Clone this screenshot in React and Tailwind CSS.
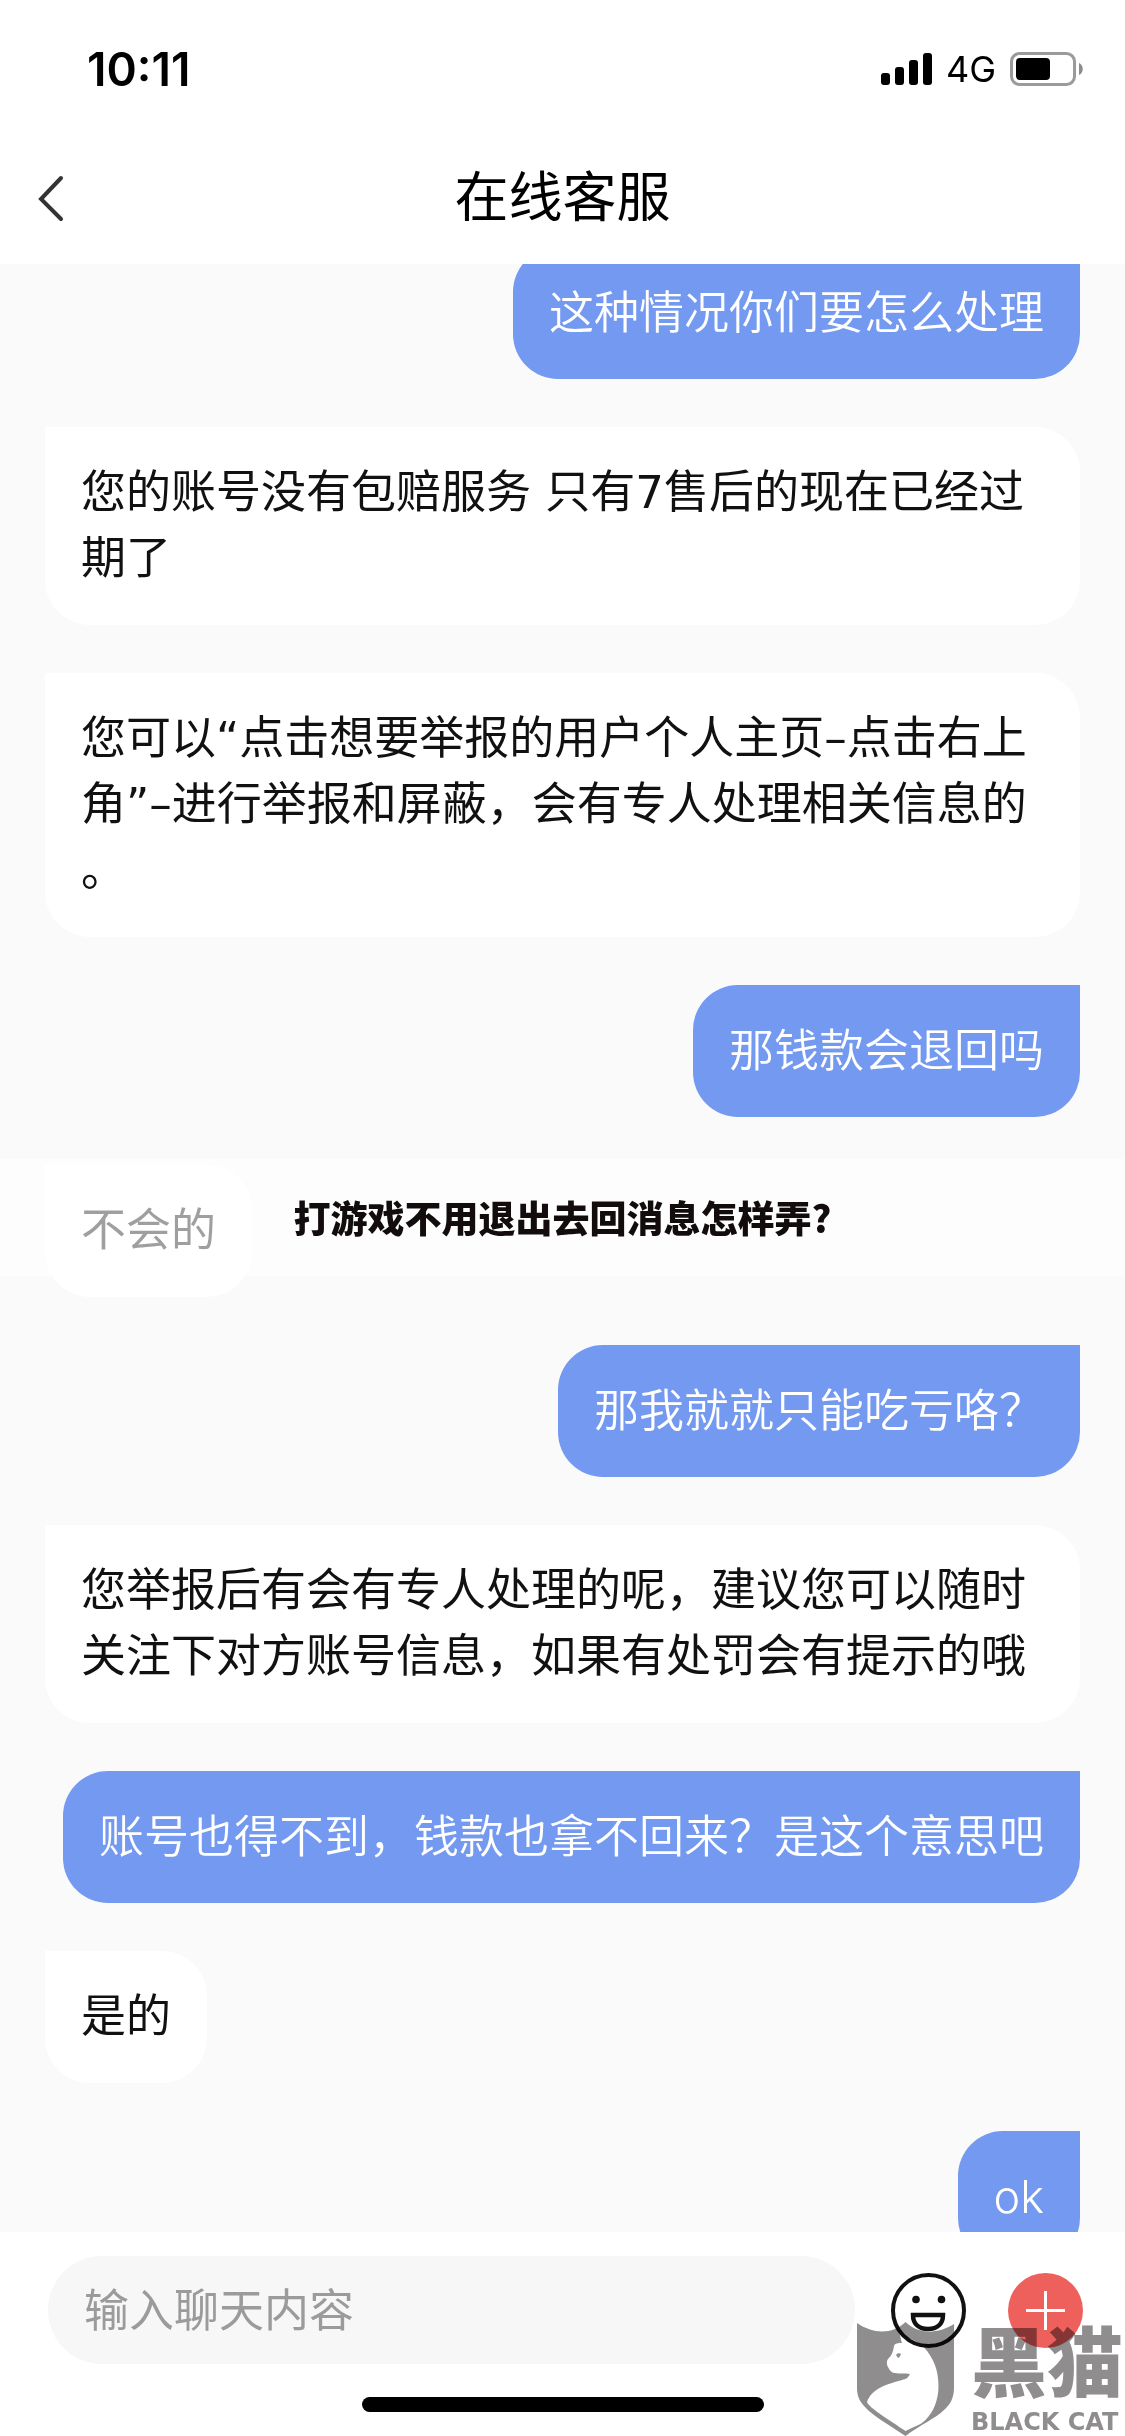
import React from 'react';
import { clsx } from 'clsx';

const messages = [
  { id: 1, from: 'me', lines: ['这种情况你们要怎么处理'] },
  { id: 2, from: 'agent', lines: ['您的账号没有包赔服务 只有7售后的现在已经过', '期了'] },
  {
    id: 3,
    from: 'agent',
    lines: ['您可以“点击想要举报的用户个人主页–点击右上', '角”–进行举报和屏蔽，会有专人处理相关信息的', '。'],
  },
  { id: 4, from: 'me', lines: ['那钱款会退回吗'] },
  { id: 5, from: 'agent', lines: ['不会的'], banner: '打游戏不用退出去回消息怎样弄?' },
  { id: 6, from: 'me', lines: ['那我就就只能吃亏咯？'] },
  { id: 7, from: 'agent', lines: ['您举报后有会有专人处理的呢，建议您可以随时', '关注下对方账号信息，如果有处罚会有提示的哦'] },
  { id: 8, from: 'me', lines: ['账号也得不到，钱款也拿不回来？是这个意思吧'] },
  { id: 9, from: 'agent', lines: ['是的'] },
  { id: 10, from: 'me', lines: ['ok'] },
];

function StatusBar() {
  return (
    <div className="h-[132px] pt-1.5 pl-[87px] pr-[42px] flex items-center justify-between">
      <span className="text-[46px] leading-none font-semibold">10:11</span>
      <div className="flex items-center gap-[14px]">
        <svg width="51" height="32" viewBox="0 0 51 32" aria-hidden="true">
          <rect x="0" y="20" width="9" height="12" rx="3" />
          <rect x="14" y="14" width="9" height="18" rx="3" />
          <rect x="28" y="7" width="9" height="25" rx="3" />
          <rect x="42" y="0" width="9" height="32" rx="3" />
        </svg>
        <span className="text-[36px] leading-none">4G</span>
        <svg width="73" height="34" viewBox="0 0 73 34" aria-hidden="true">
          <rect x="1.5" y="1.5" width="63" height="31" rx="8" fill="none" stroke="#9b9b9b" strokeWidth="3" />
          <rect x="6" y="6" width="34" height="22" rx="4" />
          <path d="M69 11c5 2 5 10 0 12z" fill="#8c8c8c" />
        </svg>
      </div>
    </div>
  );
}

function Header() {
  return (
    <header className="shrink-0 bg-white">
      <StatusBar />
      <div className="h-[132px] px-[36px] grid grid-cols-[60px_1fr_60px] items-center">
        <button type="button" aria-label="返回" className="h-[60px] flex items-center">
          <svg width="30" height="48" viewBox="0 0 30 48" fill="none" stroke="#333" strokeWidth="4" strokeLinecap="round">
            <path d="M25 4 5 25l20 20" />
          </svg>
        </button>
        <h1 className="text-[54px] leading-none text-center">在线客服</h1>
      </div>
    </header>
  );
}

function Message({ from, lines, banner }) {
  const mine = from === 'me';
  return (
    <li className={clsx('relative px-[45px] flex', mine ? 'justify-end' : 'justify-start')}>
      <p
        className={clsx(
          'px-[36px] py-[33px] text-[45px] leading-[66px] rounded-b-[45px] whitespace-nowrap',
          mine
            ? 'rounded-tl-[45px] bg-[#7499f0] text-white font-[350]'
            : "rounded-tr-[45px] bg-white text-[#111] font-['DejaVu_Sans','Noto_Sans_CJK_SC',sans-serif]",
          lines.length > 1 && 'w-full'
        )}
      >
        {lines.map((line) => (
          <span key={line} className="block">{line}</span>
        ))}
      </p>
      {banner && (
        <div className="absolute inset-x-0 -top-1.5 h-[117px] bg-white/60 flex items-center justify-center text-[37px] font-black text-[#120c0c] font-['Noto_Sans_CJK_SC',sans-serif]">
          {banner}
        </div>
      )}
    </li>
  );
}

function SmileIcon() {
  return (
    <svg width="75" height="75" viewBox="0 0 75 75" fill="none" stroke="#111" strokeWidth="4">
      <circle cx="37.5" cy="37.5" r="35.5" />
      <circle cx="25" cy="26.5" r="3.8" fill="#111" stroke="none" />
      <circle cx="50.5" cy="26.5" r="3.8" fill="#111" stroke="none" />
      <path d="M22 42h30c0 9-6 14-15 14s-15-5-15-14z" strokeWidth="4.5" />
    </svg>
  );
}

function Composer() {
  return (
    <footer className="shrink-0 bg-white pt-6 pb-6">
      <form className="pl-[48px] pr-[42px] flex items-center" onSubmit={(e) => e.preventDefault()}>
        <input
          type="text"
          aria-label="输入聊天内容"
          placeholder="输入聊天内容"
          className="flex-1 min-w-0 h-[108px] px-[36px] rounded-full bg-[#f7f7f7] text-[45px] outline-none placeholder:text-[#9b9b9b]"
        />
        <button type="button" aria-label="表情" className="ml-[36px]">
          <SmileIcon />
        </button>
        <button type="button" aria-label="更多" className="ml-[42px]">
          <svg width="75" height="75" viewBox="0 0 75 75">
            <circle cx="37.5" cy="37.5" r="37.5" fill="#ed605c" />
            <path d="M37.5 18v39M18 37.5h39" stroke="#fff" strokeWidth="3" />
          </svg>
        </button>
      </form>
      <div className="mt-[33px] mx-auto w-[402px] h-[15px] rounded-full bg-black" />
    </footer>
  );
}

function Watermark() {
  return (
    <div className="absolute right-[2px] bottom-0 flex items-end gap-[16px] text-[#8f8d8d] mix-blend-multiply pointer-events-none">
      <svg width="98" height="114" viewBox="0 0 98 114" fill="currentColor" fillRule="evenodd" aria-hidden="true">
        <path d="M0 1C16 12 35 13 48.500 0 62 13 81 12 97 2v64c0 10-4 17-10 22-8 8-24 15-38.500 26C32 103 16 94 8 85 3 80 0 74 0 66zM43 13c1 4 1 6 2 8-4 0-7 0-8 3-1 6-2 9-6 13-2 3-1 6 0 8 2 4 4 6 7 6 5 1 10 0 15 1-2 4-4 5-8 6-14 4-30 8-35 22 2 6 24 19 38.500 29 7-4 14-5 20-11 8-8 13-20 13-34 0-16-5-28-14-38-6-6-13-9-19-11-2-1-4-2-5.500-2z" />
        <path d="M39 33c1-2 4-2 5-1-1 2-1 3-3 4z" />
      </svg>
      <div className="flex flex-col">
        <span className="text-[76px] leading-[90px] font-black">黑猫</span>
        <span className="text-[24px] leading-[28px] font-bold font-['DejaVu_Sans',sans-serif]">BLACK CAT</span>
      </div>
    </div>
  );
}

export default function App() {
  return (
    <div lang="zh-CN" className="relative h-screen flex flex-col bg-[#fafafa] text-black overflow-hidden font-['Inter','Noto_Sans_CJK_SC',sans-serif]">
      <Header />
      <main className="flex-1 min-h-0 overflow-hidden">
        <ul className="-mt-[17px] flex flex-col gap-12">
          {messages.map((m) => (
            <Message key={m.id} {...m} />
          ))}
        </ul>
      </main>
      <Composer />
      <Watermark />
    </div>
  );
}
